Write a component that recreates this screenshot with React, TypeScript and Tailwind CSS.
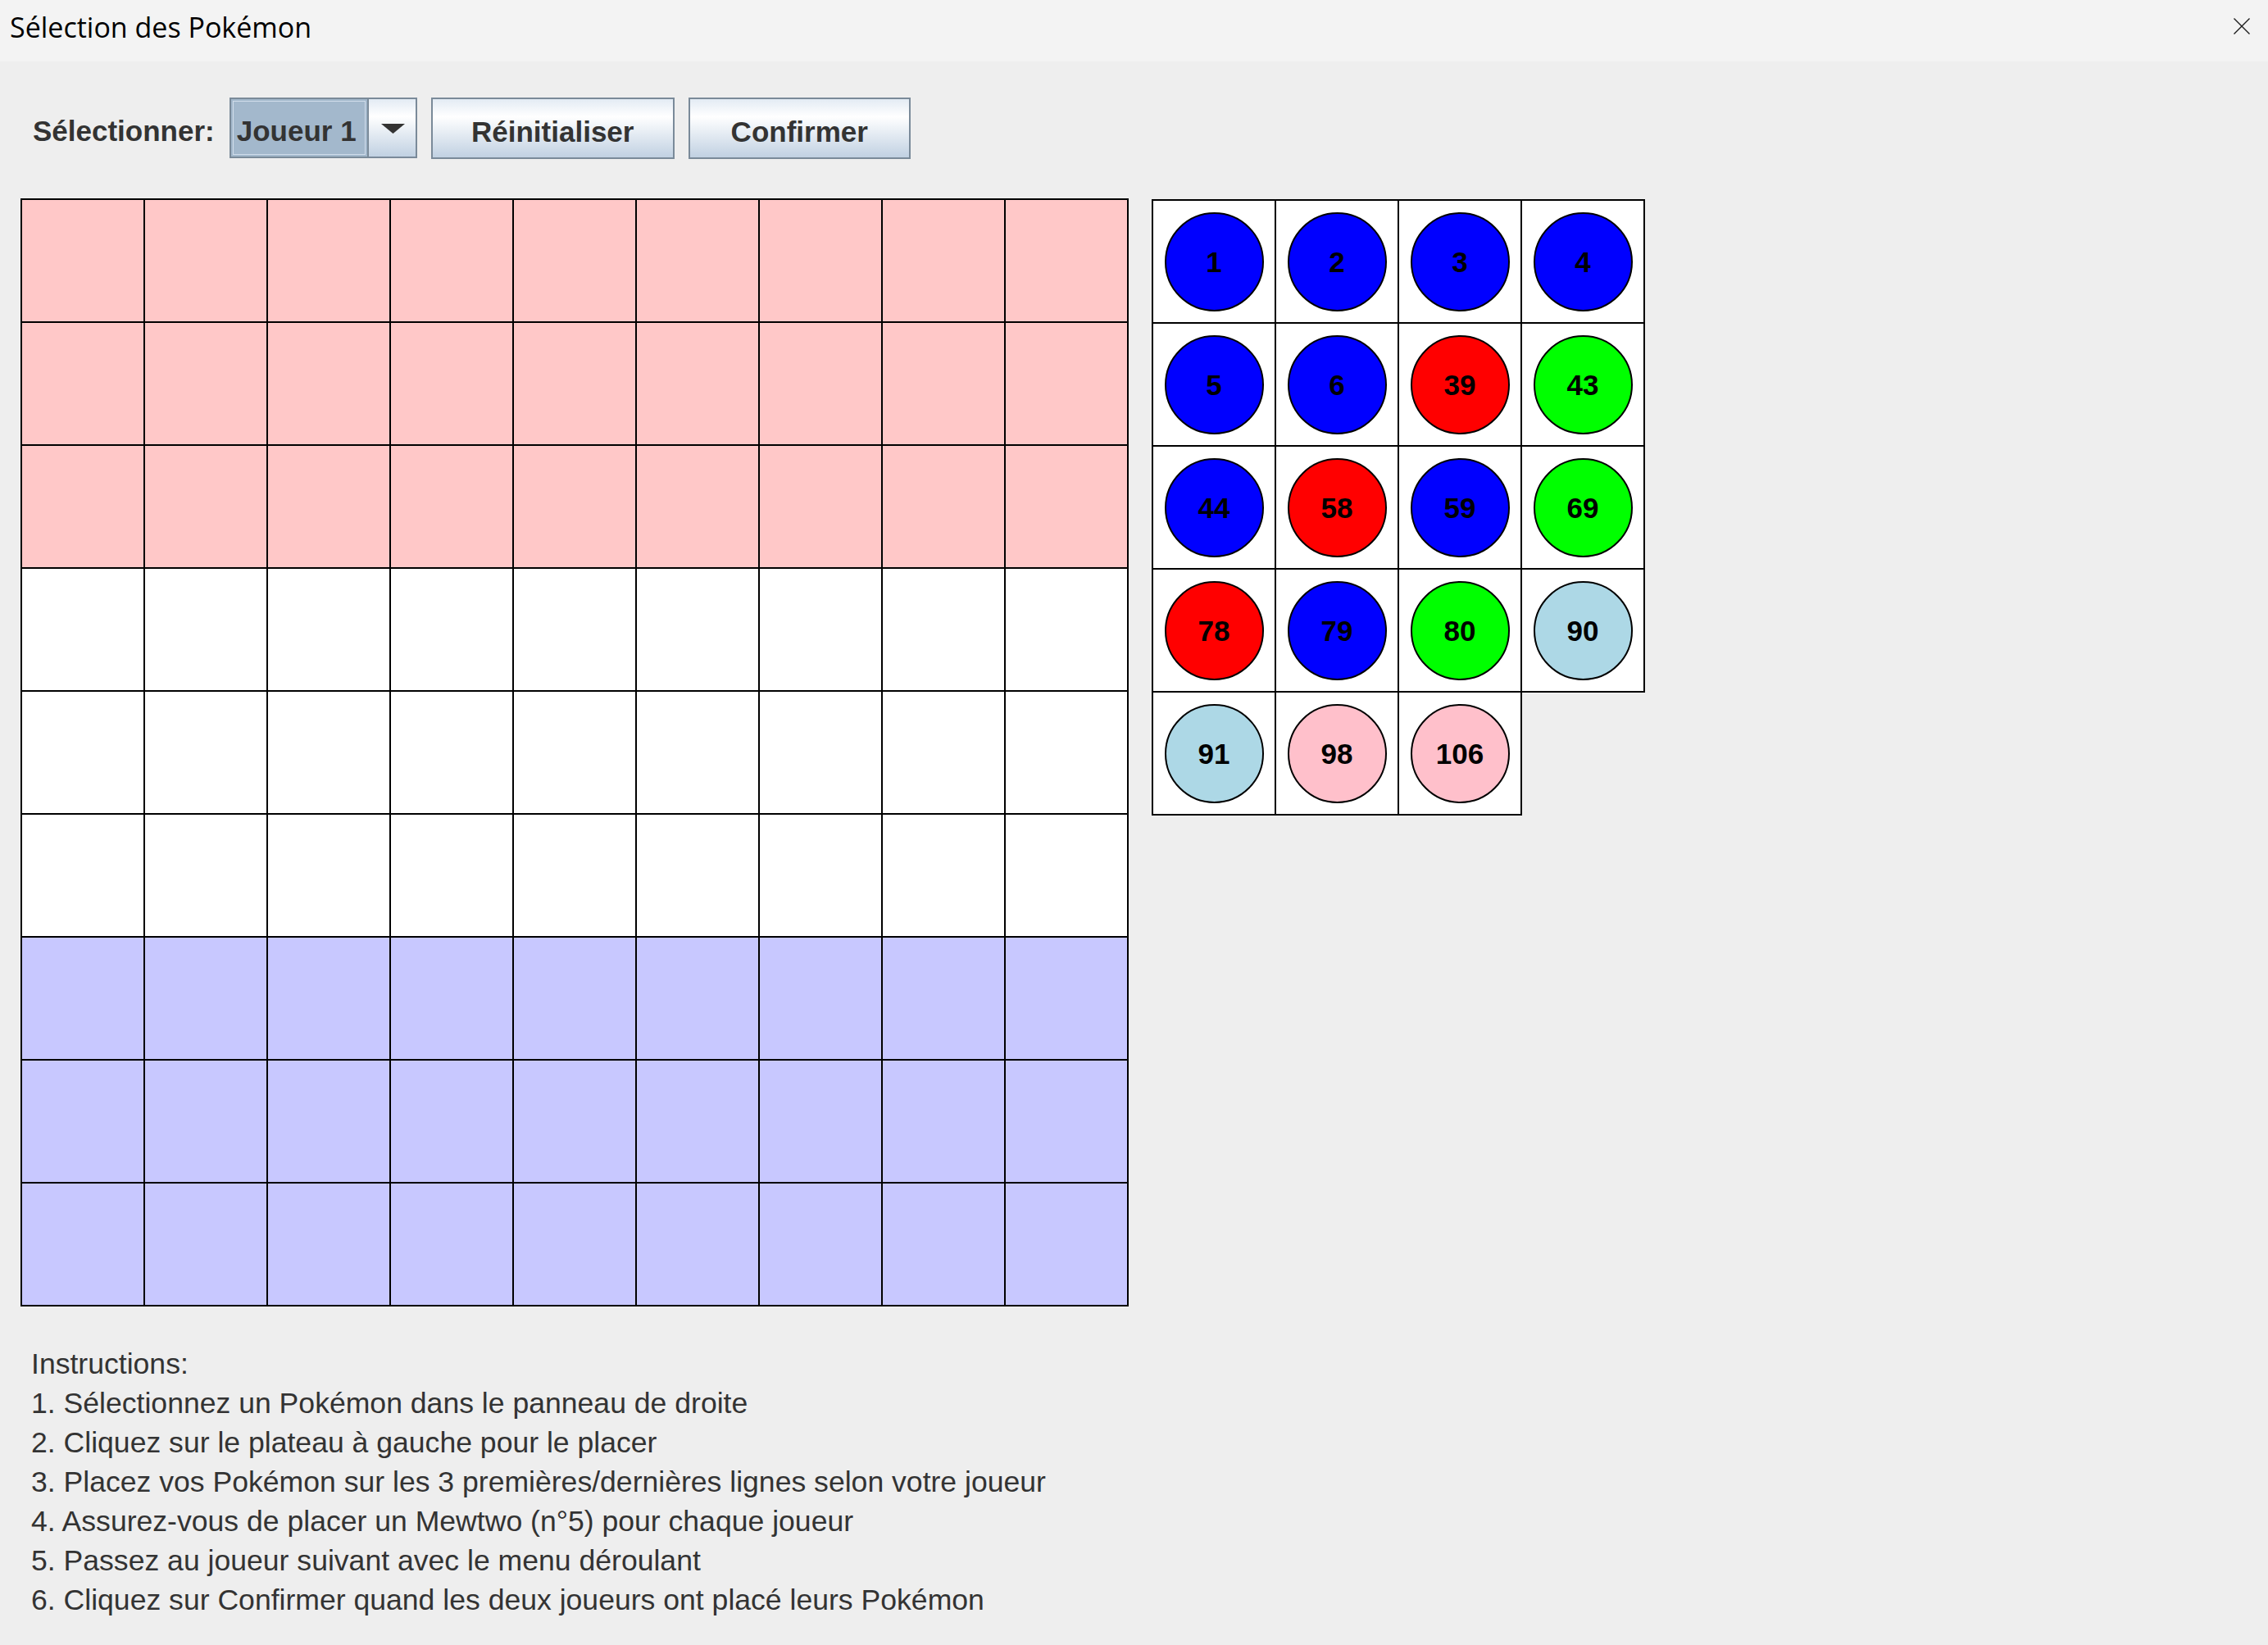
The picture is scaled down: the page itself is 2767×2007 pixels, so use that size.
import React from "react";

const board = Array.from({length: 81}, (_, i) => Math.floor(i / 9));

const pokemons: {num: number; color: string}[] = [
  {num: 1, color: "bg-[#0000ff]"},
  {num: 2, color: "bg-[#0000ff]"},
  {num: 3, color: "bg-[#0000ff]"},
  {num: 4, color: "bg-[#0000ff]"},
  {num: 5, color: "bg-[#0000ff]"},
  {num: 6, color: "bg-[#0000ff]"},
  {num: 39, color: "bg-[#ff0000]"},
  {num: 43, color: "bg-[#00ff00]"},
  {num: 44, color: "bg-[#0000ff]"},
  {num: 58, color: "bg-[#ff0000]"},
  {num: 59, color: "bg-[#0000ff]"},
  {num: 69, color: "bg-[#00ff00]"},
  {num: 78, color: "bg-[#ff0000]"},
  {num: 79, color: "bg-[#0000ff]"},
  {num: 80, color: "bg-[#00ff00]"},
  {num: 90, color: "bg-[#add8e6]"},
  {num: 91, color: "bg-[#add8e6]"},
  {num: 98, color: "bg-[#ffc0cb]"},
  {num: 106, color: "bg-[#ffc0cb]"},
];

const instructions = [
  "Instructions:",
  "1. Sélectionnez un Pokémon dans le panneau de droite",
  "2. Cliquez sur le plateau à gauche pour le placer",
  "3. Placez vos Pokémon sur les 3 premières/dernières lignes selon votre joueur",
  "4. Assurez-vous de placer un Mewtwo (n°5) pour chaque joueur",
  "5. Passez au joueur suivant avec le menu déroulant",
  "6. Cliquez sur Confirmer quand les deux joueurs ont placé leurs Pokémon",
];

function rowColor(row: number) {
  if (row < 3) return "bg-[#ffc8c8]";
  if (row < 6) return "bg-white";
  return "bg-[#c8c8ff]";
}

function MetalButton({label, width}: {label: string; width: string}) {
  return (
    <button
      className={`${width} h-[75px] border-2 border-[#7a8a99] bg-gradient-to-b from-[#e3ebf4] via-white via-30% to-[#c1d1e2] flex items-center justify-center pt-[8px] text-[35px] font-bold text-[#333333] leading-[40px] font-[family-name:'Liberation_Sans',Arial,sans-serif]`}
    >
      {label}
    </button>
  );
}

export default function App() {
  return (
    <div className="w-full h-[2007px] bg-[#eeeeee] font-[family-name:'Liberation_Sans',Arial,sans-serif] overflow-hidden">
      {/* barre de titre */}
      <div className="h-[75px] bg-[#f3f3f3] flex justify-between items-start">
        <div className="pl-[12px] pt-[10px] text-[34px] leading-[46px] text-black font-[family-name:'Open_Sans','Noto_Sans',sans-serif]">
          Sélection des Pokémon
        </div>
        <svg className="mt-[22px] mr-[22px]" width="20" height="20" viewBox="0 0 20 20">
          <path d="M0.5 0.5 L19.5 19.5 M19.5 0.5 L0.5 19.5" stroke="#1c1c1c" strokeWidth="1.4" fill="none"/>
        </svg>
      </div>

      {/* barre d'outils */}
      <div className="flex items-start pl-[40px] mt-[44px] h-[75px]">
        <span className="mt-[21px] text-[35px] leading-[40px] font-bold text-[#333333]">Sélectionner:</span>
        <div className="ml-[18px] w-[229px] h-[74px] border-2 border-[#7a8a99] flex bg-[#a3b8cc]">
          <div className="flex-1 m-[2px] border border-[#d0dcea] flex items-center pl-[4px] pt-[8px] text-[35px] leading-[40px] font-bold text-[#333333]">
            Joueur 1
          </div>
          <div className="w-[59px] border-l-2 border-[#7a8a99] bg-gradient-to-b from-[#e3ebf4] via-white via-30% to-[#c1d1e2] flex items-center justify-center pt-[2px] pl-[2px]">
            <svg width="29" height="12" viewBox="0 0 29 12">
              <polygon points="0,0 29,0 14.5,12" fill="#333333"/>
            </svg>
          </div>
        </div>
        <div className="ml-[17px]">
          <MetalButton label="Réinitialiser" width="w-[297px]"/>
        </div>
        <div className="ml-[17px]">
          <MetalButton label="Confirmer" width="w-[271px]"/>
        </div>
      </div>

      {/* plateau et panneau */}
      <div className="flex items-start mt-[48px] pl-[25px]">
        <div className="grid grid-cols-[repeat(9,148px)] gap-[2px] p-[2px] bg-black">
          {board.map((row, i) => (
            <div key={i} className={`h-[148px] ${rowColor(row)}`}/>
          ))}
        </div>

        <div className="ml-[28px] mt-[1px] grid grid-cols-[152px_150px_150px_150px]">
          {pokemons.map((p, i) => (
            <div
              key={p.num}
              className={`bg-white border-r-2 border-b-2 border-black flex items-center justify-center ${i % 4 === 0 ? "border-l-2" : ""} ${i < 4 ? "border-t-2 h-[152px]" : "h-[150px]"}`}
            >
              <div className={`w-[121px] h-[121px] rounded-full border-2 border-black ${p.color} flex items-center justify-center pt-[2px] text-[35px] leading-[40px] font-bold text-black`}>
                {p.num}
              </div>
            </div>
          ))}
        </div>
      </div>

      {/* instructions */}
      <div className="mt-[46px] pl-[38px] text-[35.6px] leading-[48px] text-[#333333]">
        {instructions.map((line) => (
          <div key={line}>{line}</div>
        ))}
      </div>
    </div>
  );
}
